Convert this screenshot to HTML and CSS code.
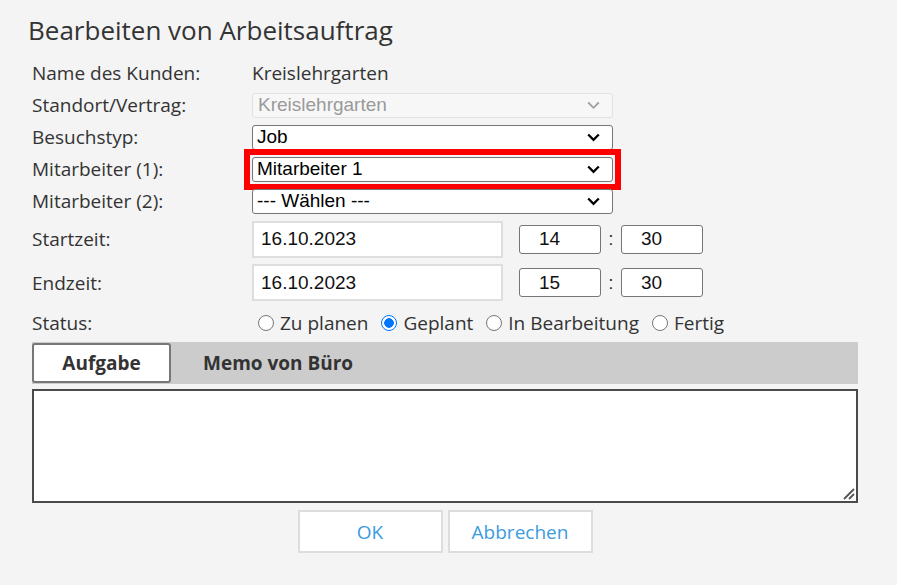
FILE: index.html
```html
<!DOCTYPE html>
<html lang="de">
<head>
<meta charset="utf-8">
<title>Bearbeiten von Arbeitsauftrag</title>
<link rel="stylesheet" href="styles.css">
</head>
<body>
<div class="dialog">
  <h1 class="title">Bearbeiten von Arbeitsauftrag</h1>
  <div class="form">
    <div class="label">Name des Kunden:</div>
    <div class="value">Kreislehrgarten</div>

    <div class="label">Standort/Vertrag:</div>
    <div class="select disabled">
      <span>Kreislehrgarten</span>
      <svg class="chev" width="13" height="9" viewBox="0 0 13 9"><path d="M1.2 1.5 L6.5 6.8 L11.8 1.5" fill="none" stroke="#a0a0a0" stroke-width="1.8"/></svg>
    </div>

    <div class="label">Besuchstyp:</div>
    <div class="select">
      <span>Job</span>
      <svg class="chev" width="13" height="9" viewBox="0 0 13 9"><path d="M1.2 1.5 L6.5 6.8 L11.8 1.5" fill="none" stroke="#000" stroke-width="2.3"/></svg>
    </div>

    <div class="label">Mitarbeiter (1):</div>
    <div class="select highlight">
      <span>Mitarbeiter 1</span>
      <svg class="chev" width="13" height="9" viewBox="0 0 13 9"><path d="M1.2 1.5 L6.5 6.8 L11.8 1.5" fill="none" stroke="#000" stroke-width="2.3"/></svg>
    </div>

    <div class="label">Mitarbeiter (2):</div>
    <div class="select">
      <span>--- Wählen ---</span>
      <svg class="chev" width="13" height="9" viewBox="0 0 13 9"><path d="M1.2 1.5 L6.5 6.8 L11.8 1.5" fill="none" stroke="#000" stroke-width="2.3"/></svg>
    </div>

    <div class="label">Startzeit:</div>
    <div class="timerow">
      <div class="date">16.10.2023</div>
      <div class="time">14</div>
      <div class="colon">:</div>
      <div class="time">30</div>
    </div>

    <div class="label">Endzeit:</div>
    <div class="timerow">
      <div class="date">16.10.2023</div>
      <div class="time">15</div>
      <div class="colon">:</div>
      <div class="time">30</div>
    </div>

    <div class="label">Status:</div>
    <div class="radios">
      <div class="radio"><span class="dot"></span>Zu planen</div>
      <div class="radio"><span class="dot checked"></span>Geplant</div>
      <div class="radio"><span class="dot"></span>In Bearbeitung</div>
      <div class="radio"><span class="dot"></span>Fertig</div>
    </div>
  </div>

  <div class="tabs">
    <div class="tab active">Aufgabe</div>
    <div class="tab">Memo von Büro</div>
  </div>
  <div class="memo">
    <svg class="grip" width="14" height="14" viewBox="0 0 14 14"><path d="M13 3 L3 13 M13 8 L8 13" stroke="#555" stroke-width="1.8" fill="none"/></svg>
  </div>
  <div class="actions">
    <div class="btn">OK</div>
    <div class="btn">Abbrechen</div>
  </div>
</div>
</body>
</html>
```
FILE: styles.css
```css
html, body {
  margin: 0;
  background: #f4f4f4;
}
body {
  font-family: "Open Sans", "Liberation Sans", sans-serif;
  color: #333;
}
.dialog {
  padding: 13px 39px 0 32px;
}
.title {
  margin: 0 0 9px -4px;
  font-size: 26px;
  font-weight: 400;
  line-height: 35px;
  color: #333;
}
.form {
  display: grid;
  grid-template-columns: 220px 1fr;
  grid-template-rows: repeat(5, 32px) 44px 43px 38px;
  align-items: center;
  font-size: 19px;
}
.label, .value {
  line-height: 26px;
}
.select {
  position: relative;
  box-sizing: border-box;
  width: 361px;
  height: 25px;
  border: 1px solid #767676;
  border-radius: 3px;
  background: #fff;
  display: flex;
  align-items: center;
  padding-left: 4px;
  font-family: "Liberation Sans", Arial, sans-serif;
  font-size: 19px;
  color: #000;
}
.select .chev {
  margin-left: auto;
  margin-right: 12px;
}
.select.disabled {
  border-color: #e2e2e2;
  background: #f7f7f7;
  color: #9a9a9a;
  padding-left: 5px;
}
.select.highlight::after {
  content: "";
  position: absolute;
  left: -9px;
  right: -9px;
  top: -9px;
  bottom: -9px;
  border: 6px solid #ff0000;
}
.timerow {
  display: flex;
  align-items: center;
  font-family: "Liberation Sans", Arial, sans-serif;
  font-size: 19px;
  color: #111;
}
.date {
  box-sizing: border-box;
  width: 251px;
  height: 37px;
  border: 2px solid #dedede;
  background: #fff;
  padding-left: 7px;
  display: flex;
  align-items: center;
}
.time {
  box-sizing: border-box;
  width: 82px;
  height: 29px;
  border: 1px solid #767676;
  border-radius: 3px;
  background: #fff;
  padding-left: 19px;
  display: flex;
  align-items: center;
}
.date + .time {
  margin-left: 16px;
}
.colon {
  width: 20px;
  text-align: center;
  color: #333;
}
.radios {
  display: flex;
  align-items: center;
  padding-left: 6px;
}
.radio {
  display: flex;
  align-items: center;
  margin-right: 13px;
  line-height: 26px;
}
.dot {
  box-sizing: border-box;
  width: 16px;
  height: 16px;
  border: 1px solid #767676;
  border-radius: 50%;
  background: #fff;
  margin-right: 6px;
}
.dot.checked {
  border: 1.5px solid #0075ff;
  background: radial-gradient(circle, #0075ff 0 4.5px, #fff 5px);
}
.tabs {
  display: flex;
  align-items: center;
  box-sizing: border-box;
  height: 42px;
  background: #cccccc;
  font-size: 19px;
  font-weight: 700;
  color: #333;
}
.tab {
  padding: 0 32px;
  line-height: 26px;
}
.tab.active {
  box-sizing: border-box;
  width: 139px;
  height: 40px;
  padding: 0;
  border: 2px solid #777;
  border-radius: 3px;
  background: #fff;
  display: flex;
  align-items: center;
  justify-content: center;
}
.memo {
  position: relative;
  box-sizing: border-box;
  height: 114px;
  margin-top: 5px;
  border: 2px solid #4a4a4a;
  background: #fff;
}
.grip {
  position: absolute;
  right: 1px;
  bottom: 1px;
}
.actions {
  display: flex;
  justify-content: center;
  gap: 5px;
  margin-top: 7px;
}
.btn {
  box-sizing: border-box;
  width: 145px;
  height: 43px;
  border: 2px solid #dddddd;
  background: #fff;
  color: #3d9be0;
  font-size: 19px;
  display: flex;
  align-items: center;
  justify-content: center;
}
```
